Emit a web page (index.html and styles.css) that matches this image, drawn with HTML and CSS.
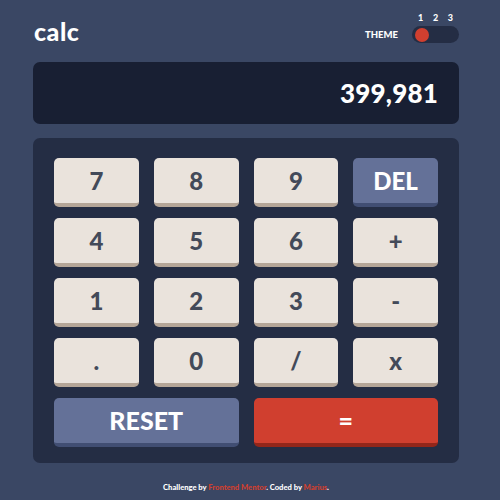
FILE: index.html
```html
<!DOCTYPE html>
<html>
<head>
<meta charset="utf-8">
<link rel="stylesheet" href="styles.css">
</head>
<body>
<main class="app">
  <header class="header">
    <h1 class="logo">calc</h1>
    <div class="theme">
      <span class="theme-label">THEME</span>
      <div class="theme-switch">
        <div class="theme-nums"><span>1</span><span>2</span><span>3</span></div>
        <div class="toggle"><span class="knob"></span></div>
      </div>
    </div>
  </header>
  <section class="display">399,981</section>
  <section class="keypad">
    <button class="key">7</button>
    <button class="key">8</button>
    <button class="key">9</button>
    <button class="key key-blue">DEL</button>
    <button class="key">4</button>
    <button class="key">5</button>
    <button class="key">6</button>
    <button class="key">+</button>
    <button class="key">1</button>
    <button class="key">2</button>
    <button class="key">3</button>
    <button class="key">-</button>
    <button class="key">.</button>
    <button class="key">0</button>
    <button class="key">/</button>
    <button class="key">x</button>
    <button class="key key-blue key-wide">RESET</button>
    <button class="key key-red key-wide">=</button>
  </section>
  <footer class="footer">Challenge by <span class="red">Frontend Mentor</span>. Coded by <span class="red">Marius</span>.</footer>
</main>
</body>
</html>
```
FILE: styles.css
```css
* { box-sizing: border-box; }
html, body { margin: 0; padding: 0; }
body {
  background: #3a4764;
  font-family: "Lato", "Open Sans", sans-serif;
  font-weight: 700;
  color: #fff;
  width: 500px;
  height: 500px;
}
.app {
  width: 426px;
  margin-left: 33px;
}
.header {
  display: flex;
  justify-content: space-between;
  align-items: flex-end;
  height: 62px;
  padding-bottom: 19px;
}
.logo {
  margin: 0 0 -1px 1px;
  font-size: 25px;
  line-height: 25px;
  font-weight: 900;
  letter-spacing: 0.5px;
}
.theme {
  display: flex;
  align-items: flex-end;
  gap: 14px;
}
.theme-label {
  font-size: 9.5px;
  font-weight: 900;
  line-height: 16px;
  letter-spacing: 0;
}
.theme-switch {
  display: flex;
  flex-direction: column;
  gap: 4px;
}
.theme-nums {
  display: flex;
  justify-content: space-between;
  padding: 0 6px 0 6px;
  font-size: 9px;
  font-weight: 900;
  line-height: 9px;
}
.toggle {
  width: 47px;
  height: 17px;
  border-radius: 9px;
  background: #242d44;
  padding: 2px 3px;
  display: flex;
  align-items: center;
}
.knob {
  width: 14px;
  height: 14px;
  border-radius: 50%;
  background: #d03f2f;
}
.display {
  height: 62px;
  border-radius: 7px;
  background: #181f33;
  display: flex;
  align-items: center;
  justify-content: flex-end;
  padding-right: 21px;
  font-size: 26px;
  font-weight: 900;
  letter-spacing: 0.2px;
}
.keypad {
  margin-top: 14px;
  background: #242d44;
  border-radius: 7px;
  padding: 20px 21px 16px;
  display: grid;
  grid-template-columns: repeat(4, 1fr);
  column-gap: 15px;
  row-gap: 11px;
}
.key {
  height: 49px;
  border: none;
  border-bottom: 4px solid #b4a597;
  border-radius: 5px;
  background: #eae3dc;
  color: #434a59;
  font-family: inherit;
  font-weight: 900;
  font-size: 24px;
  padding: 0;
  line-height: 1;
}
.key-blue {
  background: #647198;
  border-bottom-color: #414e73;
  color: #fff;
}
.key-red {
  background: #d03f2f;
  border-bottom-color: #93261a;
  color: #fff;
}
.key-wide {
  grid-column: span 2;
  font-size: 25px;
}
.footer {
  margin-top: 19px;
  text-align: center;
  font-size: 7.6px;
  font-weight: 900;
}
.red { color: #d03f2f; }
```
